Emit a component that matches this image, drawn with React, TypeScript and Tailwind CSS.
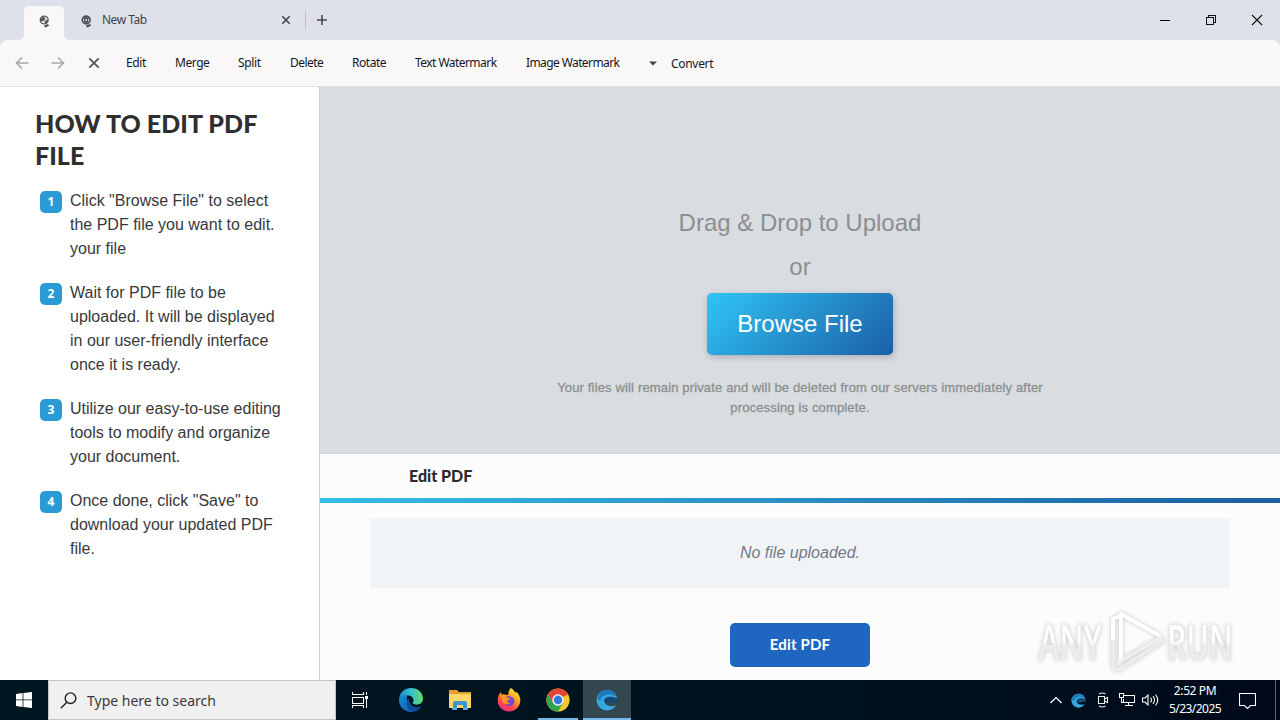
import type { ReactNode } from 'react'

interface MenuItem {
  label: string
  className: string
}

interface Step {
  lines: string[]
}

const menuItems: MenuItem[] = [
  { label: 'Edit', className: 'w-[20px] tracking-[-0.35px]' },
  { label: 'Merge', className: 'w-[34px] tracking-[-0.45px]' },
  { label: 'Split', className: 'w-[23px] tracking-[-0.35px]' },
  { label: 'Delete', className: 'w-[33px] tracking-[-0.55px]' },
  { label: 'Rotate', className: 'w-[34px] tracking-[-0.45px]' },
  { label: 'Text Watermark', className: 'w-[82px] tracking-[-0.55px]' },
  { label: 'Image Watermark', className: 'w-[94px] tracking-[-0.6px]' },
]

const steps: Step[] = [
  { lines: ['Click "Browse File" to select', 'the PDF file you want to edit.', 'your file'] },
  { lines: ['Wait for PDF file to be', 'uploaded. It will be displayed', 'in our user-friendly interface', 'once it is ready.'] },
  { lines: ['Utilize our easy-to-use editing', 'tools to modify and organize', 'your document.'] },
  { lines: ['Once done, click "Save" to', 'download your updated PDF', 'file.'] },
]

const GlobeIcon = () => (
  <svg width="12" height="14" viewBox="0 0 12 14" fill="none" className="shrink-0">
    <circle cx="5.2" cy="5" r="3.900" stroke="#54585d" strokeWidth="1.400" />
    <path d="M1.500 3.500L4 2l2 .5.500 1.500-1.800 2-2.700.5zM5.500 6l3.300-1.500-.3 3L6 9z" fill="#54585d" />
    <path d="M5.500 11.700l4-1.800" stroke="#3c4043" strokeWidth="2" />
  </svg>
)

const ChromeGlyph = () => (
  <svg width="12" height="14" viewBox="0 0 12 14" fill="none" className="mt-[3px] shrink-0">
    <circle cx="5.2" cy="5" r="3.900" stroke="#4d5156" strokeWidth="1.700" />
    <circle cx="5.2" cy="5" r="1.600" stroke="#4d5156" strokeWidth="1.200" />
    <path d="M2 3h6.600M3.400 5.800l1.500 3M7 5.800L5.300 9" stroke="#4d5156" strokeWidth="1.300" />
    <path d="M5.500 11.700l4-1.800" stroke="#3c4043" strokeWidth="2" />
  </svg>
)

const TabStrip = () => (
  <div className="flex h-10 bg-[#dee1ea] pl-[24px]">
    <div className="relative mt-[6px] flex h-[34px] w-[40px] justify-center rounded-t-[5px] bg-[#faf7f8] pt-[9px] pl-px">
      <GlobeIcon />
      <svg width="52" height="6" viewBox="0 0 52 6" className="absolute -left-[6px] bottom-0">
        <path d="M0 6q6 0 6-6v6zM52 6q-6 0-6-6v6z" fill="#faf7f8" />
      </svg>
    </div>
    <div className="flex w-[241px] items-center pl-[17px]">
      <ChromeGlyph />
      <span className="ml-[9px] font-['Noto_Sans'] text-[12px] tracking-[-0.5px] text-[#3f4349]">New Tab</span>
      <svg width="10" height="10" viewBox="0 0 10 10" className="mr-[14px] ml-auto">
        <path d="M1.300 1.300l7.400 7.400M8.700 1.300L1.300 8.700" stroke="#45484d" strokeWidth="1.600" />
      </svg>
    </div>
    <div className="mt-[12px] h-4 w-px bg-[#a2c1ec]" />
    <svg width="12" height="12" viewBox="0 0 12 12" className="mt-[14px] ml-[10px]">
      <path d="M6 1v10M1 6h10" stroke="#45484d" strokeWidth="1.600" />
    </svg>
    <div className="ml-auto flex items-center">
      <span className="flex w-[46px] justify-center"><span className="h-px w-[10px] bg-black" /></span>
      <svg width="46" height="12" viewBox="0 0 46 12" fill="none" stroke="#111" shapeRendering="crispEdges">
        <path d="M18.500 3.500h7v7h-7zM20.500 3.500v-2h7v7h-2" />
      </svg>
      <svg width="46" height="12" viewBox="0 0 46 12" stroke="#111" strokeWidth="1.100">
        <path d="M18 1l10 10M28 1L18 11" />
      </svg>
    </div>
  </div>
)

const Toolbar = () => (
  <div className="bg-[#dee1ea]">
    <div className="flex h-[47px] items-center rounded-t-[8px] border-b border-[#dedfe1] bg-[#faf7f8] pl-[15px] font-['Noto_Sans'] text-[12px] text-[#16171a]">
      <svg width="14" height="14" viewBox="0 0 14 14" fill="none" stroke="#a9a8aa" strokeWidth="1.600">
        <path d="M13.500 7H2M7 1.500L1.500 7 7 12.500" />
      </svg>
      <svg width="14" height="14" viewBox="0 0 14 14" fill="none" stroke="#a9a8aa" strokeWidth="1.600" className="ml-[22px]">
        <path d="M.5 7H12M7 1.500L12.500 7 7 12.500" />
      </svg>
      <svg width="12" height="12" viewBox="0 0 12 12" stroke="#55565a" strokeWidth="1.800" className="ml-[23px]">
        <path d="M1.300 1.300l9.400 9.400M10.700 1.300L1.300 10.700" />
      </svg>
      <div className="ml-[26px] flex gap-[29px] pb-px">
        {menuItems.map((item) => (
          <span key={item.label} className={`whitespace-nowrap ${item.className}`}>{item.label}</span>
        ))}
      </div>
      <svg width="8" height="5" viewBox="0 0 8 5" className="ml-[29px]">
        <path d="M0 .5h8L4 4.500z" fill="#444" />
      </svg>
      <span className="ml-[14px] pt-px tracking-[-0.3px]">Convert</span>
    </div>
  </div>
)

const Sidebar = () => (
  <div className="w-[320px] shrink-0 border-r border-[#cccdcf] bg-white pt-[20px]">
    <h1 className="ml-[35px] font-[Lato] text-[25px] leading-[32px] font-black tracking-[0.05px] whitespace-nowrap text-[#2f2f2f]">
      HOW TO EDIT PDF<br />FILE
    </h1>
    <ol className="mt-[18px] space-y-5 pl-[40px]">
      {steps.map((step, i) => (
        <li key={i} className="flex gap-2">
          <span className="mt-[2px] flex h-[22px] w-[22px] shrink-0 items-center justify-center rounded-[5px] bg-[#2a9bd6] font-['Open_Sans'] text-[12px] font-bold text-white">
            {i + 1}
          </span>
          <p className="font-['Liberation_Sans'] text-[16px] leading-6 whitespace-nowrap text-[#38393b]">
            {step.lines.map((line) => (
              <span key={line} className="block">{line}</span>
            ))}
          </p>
        </li>
      ))}
    </ol>
  </div>
)

const Watermark = () => (
  <svg
    width="220"
    height="76"
    viewBox="0 0 220 76"
    className="absolute right-[24px] bottom-0 overflow-visible drop-shadow-[0_0_2px_#c4c4c4]"
  >
    <defs>
      <linearGradient id="mark" x1="0" y1="0" x2="0" y2="1">
        <stop offset=".5" stopColor="#ffffff" />
        <stop offset=".58" stopColor="#ececec" />
      </linearGradient>
    </defs>
    <g fill="url(#mark)" stroke="#ededed" strokeWidth=".6" fontFamily="'Open Sans', sans-serif" fontSize="49" fontWeight="600">
      <text transform="translate(3 56) scale(.63 1)">ANY</text>
      <text transform="translate(131 56) scale(.62 1)">RUN</text>
    </g>
    <g fill="none" strokeLinejoin="round" strokeWidth="4">
      <path d="M85 58V10l41 23" stroke="#fff" />
      <path d="M77 13v48q1 6 7 4l44-29" stroke="#ececec" />
      <path d="M77 36V15l7-3" stroke="#fff" />
      <path d="M85 57l41-24" stroke="#eee" />
    </g>
  </svg>
)

const MainPanel = () => (
  <div className="relative flex flex-1 flex-col bg-[#fcfcfc] font-['Liberation_Sans']">
    <div className="flex h-[367px] flex-col items-center border-b border-[#d2d3d4] bg-[#d9dde0] pt-[114px] text-[#8b8f91]">
      <p className="text-[24px] leading-[44px]">Drag &amp; Drop to Upload</p>
      <p className="text-[24px] leading-[44px]">or</p>
      <button className="mt-[4px] h-[62px] w-[186px] shrink-0 rounded-[5px] bg-[linear-gradient(135deg,#30c5f4,#1b5fa8)] text-[24px] text-white shadow-[1px_2px_7px_rgba(0,0,0,0.22)]">
        Browse File
      </button>
      <p className="mt-[23px] text-center text-[13px] leading-5 tracking-[0.15px] whitespace-nowrap [-webkit-text-stroke:0.3px_#8b8f91]">
        Your files will remain private and will be deleted from our servers immediately after<br />
        processing is complete.
      </p>
    </div>
    <h2 className="h-[44px] pl-[89px] font-[Lato] text-[16px] leading-[43px] font-black text-[#2b2b2b]">Edit PDF</h2>
    <div className="h-[5px] bg-[linear-gradient(90deg,#35bde8,#1b5fa0)]" />
    <div className="mx-[50px] mt-[15px] flex h-[70px] items-center justify-center bg-[#f1f4f7] text-[16px] text-[#737985] italic">
      No file uploaded.
    </div>
    <button className="mx-auto mt-[35px] h-[44px] w-[140px] rounded-[5px] bg-[#1f66c1] pb-px font-[Lato] text-[15px] font-bold tracking-[0.15px] text-white">
      Edit PDF
    </button>
    <Watermark />
  </div>
)

const EdgeIcon = () => (
  <svg width="24" height="24" viewBox="0 0 24 24">
    <defs>
      <linearGradient id="edgeTop" x1="0" y1=".5" x2="1" y2=".5">
        <stop offset="0" stopColor="#1787cf" />
        <stop offset=".5" stopColor="#35bfd0" />
        <stop offset="1" stopColor="#64dc65" />
      </linearGradient>
      <linearGradient id="edgeLow" x1="0" y1="0" x2="1" y2="1">
        <stop offset="0" stopColor="#1691da" />
        <stop offset="1" stopColor="#0d4da2" />
      </linearGradient>
    </defs>
    <path d="M0 11C.5 4.500 5.500 0 12 0c7 0 12 4.800 12 10.500 0 4-3 6-6.500 6-3 0-4.500-1.200-3.400-2.500C15.500 12 14 8 9.500 7.500 5 7 1.500 8.500 0 11z" fill="url(#edgeTop)" />
    <path d="M0 11c1.500-3 5-4.200 8.500-3.800C7 10 7.500 17 15 19.500c3 .8 5.500.2 7.500-1.200C20 22 16.500 24 12 24 5 24-.5 18.500 0 11z" fill="url(#edgeLow)" />
    <path d="M9.500 10c-4 3.500-1.500 12.500 5.500 13.600 3-.6 5.800-2.600 7.500-5.300-4.500 2.600-12 .7-13-8.300z" fill="#114b93" />
  </svg>
)

const FolderIcon = () => (
  <svg width="22" height="20" viewBox="0 0 22 20">
    <path d="M0 0h8l2 2h12v4H0z" fill="#e0a02d" />
    <path d="M0 4h22v14H0z" fill="#fbd769" />
    <path d="M4 20v-7q0-2 2-2h10q2 0 2 2v7h-4v-5H8v5z" fill="#3d95d0" />
    <path d="M3 18v1.500h5V18zM14 18v1.500h5V18z" fill="#60b8ea" />
  </svg>
)

const FirefoxIcon = () => (
  <svg width="24" height="24" viewBox="0 0 24 24">
    <defs>
      <linearGradient id="fox" x1=".8" y1=".05" x2=".25" y2="1">
        <stop offset="0" stopColor="#ffe936" />
        <stop offset=".4" stopColor="#ff9a22" />
        <stop offset=".72" stopColor="#ff4551" />
        <stop offset="1" stopColor="#e62786" />
      </linearGradient>
    </defs>
    <path d="M14 0c2 1 3.500 3 4.400 5l.5-1.400C22 6 23.500 9.500 23.300 13 22.800 19 18 23.500 12 23.500S.8 19 .7 12.800C.6 9 2 6 4 4l.6 2.500L7 6l2 1 2.300-.3C11.300 4 12 1.500 14 0z" fill="url(#fox)" />
    <path d="M7.500 10.500C9 8 13 7.400 15.500 9.300c3 2.500 2.500 7.700-2 8.800C9 19 6.500 15 7 12l4 .5 1.500-1.500z" fill="#7548cc" />
    <path d="M2.500 7L7 7.200l3 2.600 3.500.4c-.5 1.700-2.500 1.800-3.300 2.500-.7.800.2 2.500 2.700 2-2.500 3.200-8 1.200-7.800-3.200z" fill="#ff9220" />
  </svg>
)

const ChromeIcon = () => (
  <svg width="24" height="24" viewBox="0 0 24 24">
    <circle cx="12" cy="12" r="11.600" fill="#f4c52c" />
    <path d="M12 12L2 6.200A11.600 11.600 0 0 1 22 6.200z" fill="#e44435" />
    <path d="M2 6.200A11.600 11.600 0 0 0 12 23.600l5-8.800H7z" fill="#2da44f" />
    <path d="M2 6.200l4.900 8.500L12 6.500h10L20 4 12 .4 4.500 3.200z" fill="#e44435" />
    <circle cx="12" cy="12" r="5.700" fill="#fff" />
    <circle cx="12" cy="12" r="4.400" fill="#3478df" />
  </svg>
)

const BlueSwirl = ({ size }: { size: number }) => (
  <svg width={size} height={size} viewBox="0 0 22 22">
    <path d="M18.500 3.700C13-1.500 3 1 .8 8.500-.5 15 4 21.500 11 21.500c4.200 0 7.500-2 9-5.200-4 2.300-10 .7-11.500-3C7.200 9 13 6.500 21 9.500c-.5-2.500-1.500-4.500-2.500-5.800z" fill="#35a9e1" />
    <path d="M8.300 12C7.500 8.500 14 6 21.300 9.500l.2 4.500c-3-2-6 .3-9.500.3-2 0-3.300-.7-3.700-2.300z" fill="#174873" />
    <path d="M2 7C6 0 14-.5 18.500 3.700l2 4C12 3.500 6 5.500 4 12 1.500 11 1 9 2 7z" fill="#1c7abb" />
  </svg>
)

const TaskSlot = ({ children, className = '' }: { children: ReactNode; className?: string }) => (
  <div className={`relative flex h-10 w-[48px] items-center justify-center ${className}`}>{children}</div>
)

const Taskbar = () => (
  <div className="flex h-10 bg-[linear-gradient(90deg,#001721,#00131f_60%,#000a1b)] font-['Noto_Sans']">
    <div className="flex w-[48px] items-center justify-center">
      <svg width="16" height="16" viewBox="0 0 16 16" fill="#fff">
        <path d="M0 2l6.600-1v6.500H0zM7.400.9L16 0v7.500H7.400zM0 8.300h6.600V15L0 14zM7.400 8.300H16V16l-8.600-1z" />
      </svg>
    </div>
    <div className="flex w-[288px] items-center border border-[#c4c4c4] bg-[#f0f0f0] pl-[11px]">
      <svg width="17" height="17" viewBox="0 0 17 17" fill="none" stroke="#222" strokeWidth="1.400">
        <circle cx="10.500" cy="6.200" r="5.300" />
        <path d="M6.800 10.200L.8 16.200" />
      </svg>
      <span className="ml-[10px] text-[14px] text-[#393939]">Type here to search</span>
    </div>
    <TaskSlot>
      <svg width="17" height="16" viewBox="0 0 17 16" fill="none" stroke="#fff" shapeRendering="crispEdges">
        <path d="M.5 0v2.500h11V0M.5 5.500h11v6H.5zM.5 16v-2.500h11V16M14.500 0v3M14.500 7v9" />
        <path d="M13 4h3v3h-3z" fill="#fff" stroke="none" />
      </svg>
    </TaskSlot>
    <div className="ml-[3px] flex gap-px">
      <TaskSlot><EdgeIcon /></TaskSlot>
      <TaskSlot><FolderIcon /></TaskSlot>
      <TaskSlot><FirefoxIcon /></TaskSlot>
      <TaskSlot>
        <ChromeIcon />
        <div className="absolute bottom-0 left-[4px] h-[2px] w-[40px] bg-[#76b9ed]" />
      </TaskSlot>
      <TaskSlot className="bg-[#34464f]">
        <BlueSwirl size={22} />
        <div className="absolute bottom-0 left-0 h-[2px] w-full bg-[#76b9ed]" />
      </TaskSlot>
    </div>
    <div className="ml-auto flex items-center">
      <svg width="12" height="8" viewBox="0 0 12 8" fill="none" stroke="#fff" strokeWidth="1.200">
        <path d="M.5 7L6 1.500 11.500 7" />
      </svg>
      <div className="ml-[9px]"><BlueSwirl size={15} /></div>
      <svg width="14" height="16" viewBox="0 0 14 16" fill="none" stroke="#eee" strokeWidth="1.100" className="ml-[10px]">
        <path d="M2.500 4.500h6v7h-6zM8.500 7l3-1.500v5l-3-1.500M3 2q3-2 6.500 0M3 14q3 2 6.500 0" />
      </svg>
      <svg width="16" height="14" viewBox="0 0 16 14" fill="none" stroke="#fff" className="ml-[9px]" shapeRendering="crispEdges">
        <path d="M4.500 2.500h11v7h-11v-4M.5.500h4v4h-4zM2.500 4v5.500h2M9.500 9.500v3M6 12.500h8" />
      </svg>
      <svg width="17" height="14" viewBox="0 0 17 14" fill="none" stroke="#fff" strokeWidth="1.100" className="ml-[7px]">
        <path d="M.5 5h2.500l3-3v10L3 9H.5zM8.500 4.500q2 2.500 0 5M11 3q3 4 0 8M13.500 1.500q4.500 5.500 0 11" />
      </svg>
      <div className="ml-[8px] w-[56px] text-center text-[12px] leading-[18px] whitespace-nowrap text-white">
        <p className="tracking-[-0.4px]">2:52 PM</p>
        <p className="tracking-[-0.55px]">5/23/2025</p>
      </div>
      <svg width="17" height="17" viewBox="0 0 17 17" fill="none" stroke="#fff" strokeWidth="1.100" className="ml-[16px]">
        <path d="M.5 1.500h16v12h-5l-3 3-3-3h-5z" />
      </svg>
      <div className="mr-[4px] ml-[19px] h-10 w-px bg-[#59616d]" />
    </div>
  </div>
)

export default function App() {
  return (
    <div className="flex h-[720px] w-[1280px] flex-col overflow-hidden bg-white">
      <TabStrip />
      <Toolbar />
      <div className="flex min-h-0 flex-1">
        <Sidebar />
        <MainPanel />
      </div>
      <Taskbar />
    </div>
  )
}
